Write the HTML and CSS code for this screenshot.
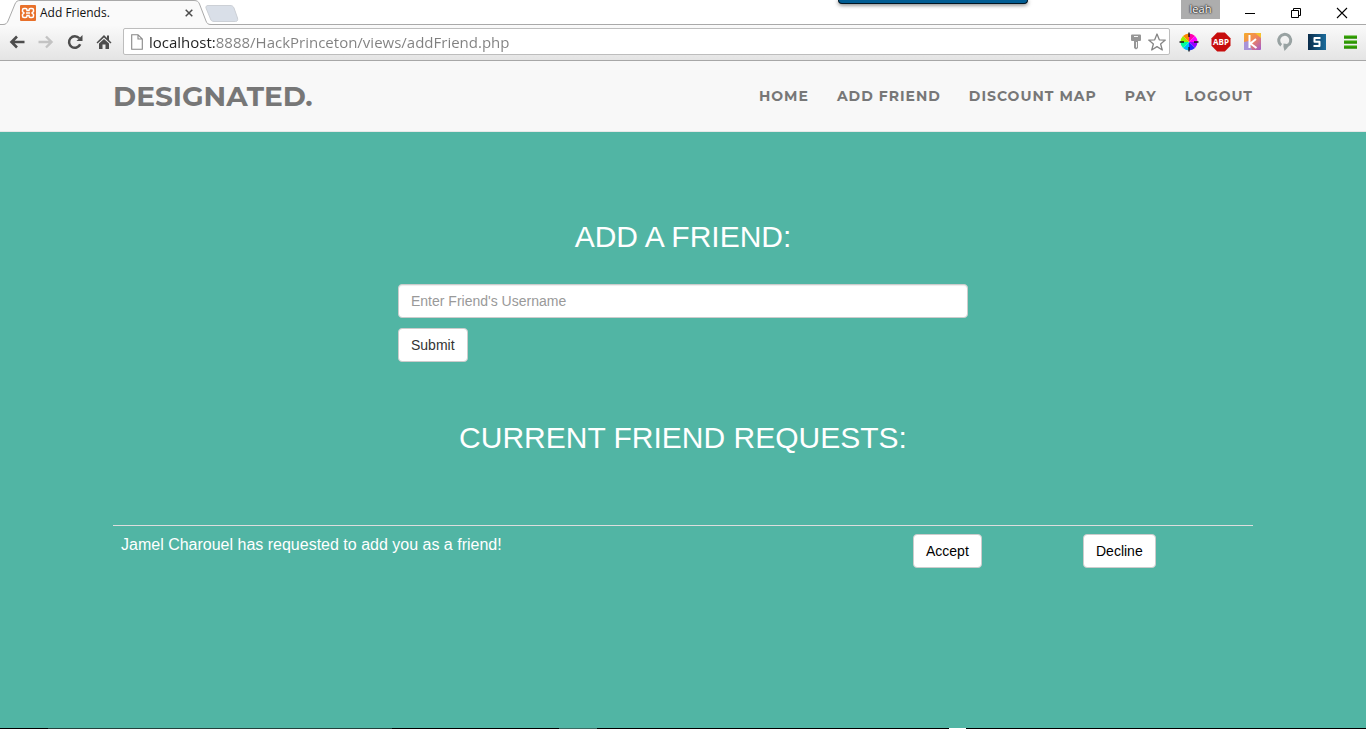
FILE: index.html
```html
<!DOCTYPE html>
<html lang="en">
<head>
  <meta charset="utf-8">
  <title>Add Friends.</title>
  <link rel="stylesheet" href="styles.css">
</head>
<body>
  <header class="browser">
    <div class="title-bar">
      <div class="tab">
        <svg class="tab-shape" width="240" height="26" viewBox="0 0 240 26">
          <path d="M0 24.500H3C6 24.500 7 23 8 21L15 4C16 1.500 17.500 .5 20 .5H194C197 .5 198.500 1.500 199.500 4L206 21C207 23.500 208 24.500 211 24.500V26H0Z" fill="#fafafa"/>
          <path d="M0 24.500H3C6 24.500 7 23 8 21L15 4C16 1.500 17.500 .5 20 .5H194C197 .5 198.500 1.500 199.500 4L206 21C207 23.500 208 24.500 211 24.500H240" fill="none" stroke="#a9a9a9"/>
          <path d="M208 5.500H230C232 5.500 233 6 234 8L237.500 18C238 20 237.500 21.500 235.500 21.500H214C212 21.500 211 20.500 210.500 19L206 8C205.500 6.500 206.500 5.500 208 5.500Z" fill="#d9dfe8" stroke="#ccd0d6"/>
        </svg>
        <svg class="favicon" width="16" height="16" viewBox="0 0 16 16">
          <rect width="16" height="16" rx="1" fill="#e8702a"/>
          <path d="M5.500 3.500H4Q2.500 3.500 2.500 5V6.500L4 8L2.500 9.500V11Q2.500 12.500 4 12.500H5.500Q7 12.500 7 11V10.500H9V11Q9 12.500 10.500 12.500H12Q13.500 12.500 13.500 11V9.500L12 8L13.500 6.500V5Q13.500 3.500 12 3.500H10.500Q9 3.500 9 5V5.500H7V5Q7 3.500 5.500 3.500Z" fill="none" stroke="#fff" stroke-width="1.500"/>
          <path d="M6 8H10" stroke="#fff" stroke-width="1.500"/>
        </svg>
        <span class="tab-title">Add Friends.</span>
        <button class="tab-close" aria-label="Close tab">
          <svg width="8" height="8" viewBox="0 0 8 8"><path d="M.7 .7L7.300 7.300M7.300 .7L.7 7.300" stroke="#4c4c4c" stroke-width="1.500"/></svg>
        </button>
      </div>
      <div class="window-controls">
        <span class="profile">leah</span>
        <button aria-label="Minimize">
          <svg width="12" height="12" viewBox="0 0 12 12"><path d="M1 6.500H11" stroke="#000"/></svg>
        </button>
        <button aria-label="Restore">
          <svg width="12" height="12" viewBox="0 0 12 12"><path d="M1.500 3.500H8.500V10.500H1.500ZM3.500 3.500V1.500H10.500V8.500H8.500" fill="none" stroke="#000"/></svg>
        </button>
        <button aria-label="Close">
          <svg width="12" height="12" viewBox="0 0 12 12"><path d="M1 1L11 11M11 1L1 11" stroke="#000" stroke-width="1.100"/></svg>
        </button>
      </div>
      <div class="drop-tab"></div>
    </div>

    <div class="toolbar">
      <div class="nav-buttons">
        <button aria-label="Back">
          <svg width="16" height="16" viewBox="0 0 16 16"><path d="M8 2.500L2.500 8L8 13.500M3 8H15.500" fill="none" stroke="#4d4d4d" stroke-width="2.600"/></svg>
        </button>
        <button aria-label="Forward">
          <svg width="16" height="16" viewBox="0 0 16 16"><path d="M8 2.500L13.500 8L8 13.500M.5 8H13" fill="none" stroke="#c3c3c3" stroke-width="2.400"/></svg>
        </button>
        <button aria-label="Reload">
          <svg width="16" height="16" viewBox="0 0 16 16"><path d="M13.200 10.300A5.800 5.800 0 1 1 12.300 4.300" fill="none" stroke="#4d4d4d" stroke-width="2.500"/><path d="M15.500 1V7H9.500Z" fill="#4d4d4d"/></svg>
        </button>
        <button aria-label="Home">
          <svg width="16" height="16" viewBox="0 0 16 16"><path d="M8 1L11 4V1.500H13V6L15.500 8.500L14.500 9.500L8 3.500L1.500 9.500L.5 8.500Z" fill="#4d4d4d"/><path d="M8 5L13 9.500V15H9.500V10.500H6.500V15H3V9.500Z" fill="#4d4d4d"/></svg>
        </button>
      </div>
      <div class="address">
        <svg width="12" height="16" viewBox="0 0 12 16"><path d="M.7 .7H7L11.300 5V15.300H.7ZM7 .7V5H11.300" fill="#fff" stroke="#888" stroke-width="1.100"/></svg>
        <input class="url" type="text" aria-label="Address" value="localhost:8888/HackPrinceton/views/addFriend.php">
        <svg width="12" height="16" viewBox="0 0 12 16"><path d="M2 .5H10Q11 .5 11 1.500V6Q11 7 10 7H8V14L6 15.500L4 14V7H2Q1 7 1 6V1.500Q1 .5 2 .5Z" fill="#969696"/><path d="M4 2.500H8M6.500 8V13.500" stroke="#f5f5f5"/></svg>
        <svg width="18" height="18" viewBox="0 0 18 18"><path d="M9 1L11.300 6.800L17.300 7.100L12.600 11L14.300 17L9 13.600L3.700 17L5.400 11L.7 7.100L6.700 6.800Z" fill="#fff" stroke="#858585" stroke-width="1.300" stroke-linejoin="round"/></svg>
      </div>
      <div class="extensions">
        <svg width="20" height="20" viewBox="0 0 20 20">
          <path d="M10 10V1.500A8.500 8.500 0 0 1 16 4Z" fill="#f0a"/><path d="M10 10L16 4A8.500 8.500 0 0 1 18.500 10Z" fill="#f0f"/>
          <path d="M10 10H18.500A8.500 8.500 0 0 1 16 16Z" fill="#90f"/><path d="M10 10L16 16A8.500 8.500 0 0 1 10 18.500Z" fill="#22f"/>
          <path d="M10 10V18.500A8.500 8.500 0 0 1 4 16Z" fill="#0bf"/><path d="M10 10L4 16A8.500 8.500 0 0 1 1.500 10Z" fill="#0f9"/>
          <path d="M10 10H1.500A8.500 8.500 0 0 1 4 4Z" fill="#9e0"/><path d="M10 10L4 4A8.500 8.500 0 0 1 10 1.500Z" fill="#f80"/>
          <path d="M10 .5V5M10 15V19.500M.5 10H5M15 10H19.500" stroke="#111" stroke-width="1.300"/>
        </svg>
        <svg width="20" height="20" viewBox="0 0 20 20">
          <path d="M6.200 .5H13.800L19.500 6.200V13.800L13.800 19.500H6.200L.5 13.800V6.200Z" fill="#c70d0d"/>
          <text class="abp" x="10" y="13" text-anchor="middle">ABP</text>
        </svg>
        <svg width="20" height="20" viewBox="0 0 20 20">
          <defs>
            <linearGradient id="kWarm" x2="1" y2="1"><stop stop-color="#f5ac28"/><stop offset=".5" stop-color="#f1845c"/><stop offset="1" stop-color="#a05ad0"/></linearGradient>
          </defs>
          <rect x="1" y="1" width="17" height="17" rx="1" fill="url(#kWarm)"/>
          <path d="M1 10L6 9L9 18H1Z" fill="#a993d8"/><path d="M12 1H18V6Z" fill="#f6c22d"/>
          <path d="M6.500 3V16M13 7L7.500 11.500L13.500 16" fill="none" stroke="#fff" stroke-width="2"/>
        </svg>
        <svg width="20" height="20" viewBox="0 0 20 20">
          <path d="M6.200 13.200A6 6 0 1 1 14.500 12C13 13.500 11 14 9.500 13" fill="none" stroke="#98a2a2" stroke-width="3"/>
          <path d="M8.500 11.500L14.500 12.500Q12.500 16.500 9.500 19Q8 15.500 8.500 11.500Z" fill="#98a2a2"/>
        </svg>
        <svg width="20" height="20" viewBox="0 0 20 20">
          <defs>
            <linearGradient id="sBlue" x2="1"><stop stop-color="#0a2c4a"/><stop offset="1" stop-color="#1b6c9c"/></linearGradient>
          </defs>
          <rect x="1" y="2" width="18" height="16" fill="url(#sBlue)"/>
          <path d="M13.500 6H7.500V9.800H12.500V14H6.500" fill="none" stroke="#fff" stroke-width="2" stroke-linejoin="round"/>
        </svg>
        <button class="menu" aria-label="Menu">
          <svg width="14" height="14" viewBox="0 0 14 14"><path d="M0 2H13M0 7H13M0 12H13" stroke="#35a305" stroke-width="3"/><path d="M0 3H13M0 8H13M0 13H13" stroke="#238000"/></svg>
        </button>
      </div>
    </div>
  </header>

  <nav class="navbar">
    <div class="container navbar-inner">
      <a class="brand" href="#">DESIGNATED.</a>
      <ul class="nav-links">
        <li><a href="#">HOME</a></li>
        <li><a href="#">ADD FRIEND</a></li>
        <li><a href="#">DISCOUNT MAP</a></li>
        <li><a href="#">PAY</a></li>
        <li><a href="#">LOGOUT</a></li>
      </ul>
    </div>
  </nav>

  <main class="page">
    <div class="container">
      <h2>ADD A FRIEND:</h2>
      <form class="friend-form" onsubmit="event.preventDefault()">
        <input class="form-control" type="text" name="username" aria-label="Friend's Username" placeholder="Enter Friend's Username">
        <button class="btn" type="submit">Submit</button>
      </form>

      <h2>CURRENT FRIEND REQUESTS:</h2>
      <table class="requests">
        <tr>
          <td>Jamel Charouel has requested to add you as a friend!</td>
          <td class="action"><button class="btn btn-dark">Accept</button></td>
          <td class="action"><button class="btn btn-dark">Decline</button></td>
          <td></td>
        </tr>
      </table>
    </div>
  </main>

  <footer class="taskbar"></footer>
</body>
</html>
```
FILE: styles.css
```css
* {
  box-sizing: border-box;
}

body {
  margin: 0;
  min-height: 100vh;
  display: flex;
  flex-direction: column;
  font-family: "Liberation Sans", Arial, sans-serif;
  font-size: 14px;
  line-height: 20px;
  background-color: #51b5a4;
}

button,
input {
  font-family: inherit;
}

svg {
  display: block;
  flex: none;
}

/* browser window */
.browser {
  font-family: "Open Sans", sans-serif;
  background-color: #fff;
  border-bottom: 1px solid #a7a7a7;
}

.browser button {
  padding: 0;
  border: none;
  background: none;
}

.title-bar {
  position: relative;
  display: flex;
  justify-content: space-between;
  height: 25px;
  border-bottom: 1px solid #a9a9a9;
}

.tab {
  position: relative;
  display: flex;
  align-items: center;
  width: 240px;
  padding: 2px 47px 0 20px;
  gap: 4px;
}

.tab-shape {
  position: absolute;
  left: 0;
  top: 0;
}

.favicon,
.tab-title,
.tab-close {
  position: relative;
}

.tab-title {
  flex: 1;
  font-size: 12px;
  color: #111;
}

.window-controls {
  display: flex;
  align-items: center;
  padding-top: 2px;
}

.window-controls button {
  display: flex;
  justify-content: center;
  width: 46px;
}

.window-controls .profile {
  align-self: flex-start;
  width: 39px;
  height: 19px;
  margin-top: -2px;
  margin-right: 7px;
  font-size: 11px;
  line-height: 18px;
  text-align: center;
  color: #fff;
  background-color: #adadad;
  text-shadow: 0 0 1px #222, 0 0 2px #222, 0 0 2px #222;
}

.window-controls button:last-child {
  margin-right: 1px;
}

.drop-tab {
  position: absolute;
  top: 0;
  left: 838px;
  width: 190px;
  height: 4px;
  background-color: #005c93;
  border: 1px solid #001522;
  border-top: none;
  border-radius: 0 0 4px 4px;
  box-shadow: 0 1px 4px rgba(0, 0, 0, 0.6);
}

.toolbar {
  display: flex;
  align-items: center;
  height: 35px;
  padding: 0 8px 2px 9px;
  background: linear-gradient(#fafafa, #e4e4e4);
}

.nav-buttons {
  display: flex;
  gap: 13px;
  margin-right: 11px;
}

.address {
  flex: 1;
  display: flex;
  align-items: center;
  gap: 6px;
  height: 27px;
  padding: 0 3px 0 7px;
  background-color: #fff;
  border: 1px solid #bdbdbd;
  border-radius: 2px;
}

/* host name is dark, the path after it is grey */
.url {
  flex: 1;
  padding: 0;
  border: none;
  font-size: 15px;
  color: transparent;
  background: linear-gradient(to right, #222 66px, #808080 66px);
  -webkit-background-clip: text;
  background-clip: text;
}

.extensions {
  display: flex;
  align-items: center;
  gap: 12px;
  margin-left: 9px;
}

.extensions .menu {
  margin-left: 5px;
}

.abp {
  font-size: 8px;
  font-weight: bold;
  fill: #fff;
}

/* site navigation */
.container {
  width: 100%;
  max-width: 1170px;
  margin: 0 auto;
  padding: 0 15px;
}

.navbar {
  background-color: #f8f8f8;
  border-bottom: 1px solid #e7e7e7;
  font-family: Montserrat, Inter, sans-serif;
  font-weight: bold;
}

.navbar-inner {
  display: flex;
  justify-content: space-between;
  align-items: center;
  min-height: 70px;
}

.navbar a {
  color: #777;
  text-decoration: none;
}

.brand {
  font-size: 28px;
}

.nav-links {
  display: flex;
  gap: 28px;
  margin: 0;
  padding: 0;
  list-style: none;
  font-size: 14px;
  letter-spacing: 1px;
}

/* page content */
.page {
  flex: 1;
  padding-top: 88px;
}

h2 {
  margin: 0 0 31px;
  font-size: 30px;
  font-weight: normal;
  line-height: 33px;
  text-align: center;
  color: #fff;
}

.friend-form {
  width: 50%;
  margin: 0 auto 59px;
}

.form-control {
  display: block;
  width: 100%;
  height: 34px;
  margin-bottom: 10px;
  padding: 6px 12px;
  font-size: 14px;
  color: #555;
  background-color: #fff;
  border: 1px solid #ccc;
  border-radius: 4px;
  box-shadow: inset 0 1px 1px rgba(0, 0, 0, 0.075);
}

.form-control::placeholder {
  color: #999;
}

.btn {
  display: block;
  padding: 6px 12px;
  font-size: 14px;
  line-height: 20px;
  color: #333;
  background-color: #fff;
  border: 1px solid #ccc;
  border-radius: 4px;
  cursor: pointer;
}

.btn-dark {
  color: #000;
}

.requests {
  width: 100%;
  margin-top: 71px;
  border-collapse: collapse;
  table-layout: fixed;
}

.requests td {
  padding: 8px;
  border-top: 1px solid #ddd;
  font-size: 16px;
  line-height: 22px;
  vertical-align: top;
  color: #fff;
}

.requests .action {
  width: 170px;
}

.requests td:last-child {
  width: 8px;
  padding: 0;
}

.taskbar {
  height: 1px;
  background: linear-gradient(to right, #000 48px, #24403c 48px, #24403c 392px, #000 392px, #000 559px, #3b6b63 559px, #3b6b63 597px, #000 597px, #000 949px, #fff 949px, #fff 966px, #000 966px);
}
```
